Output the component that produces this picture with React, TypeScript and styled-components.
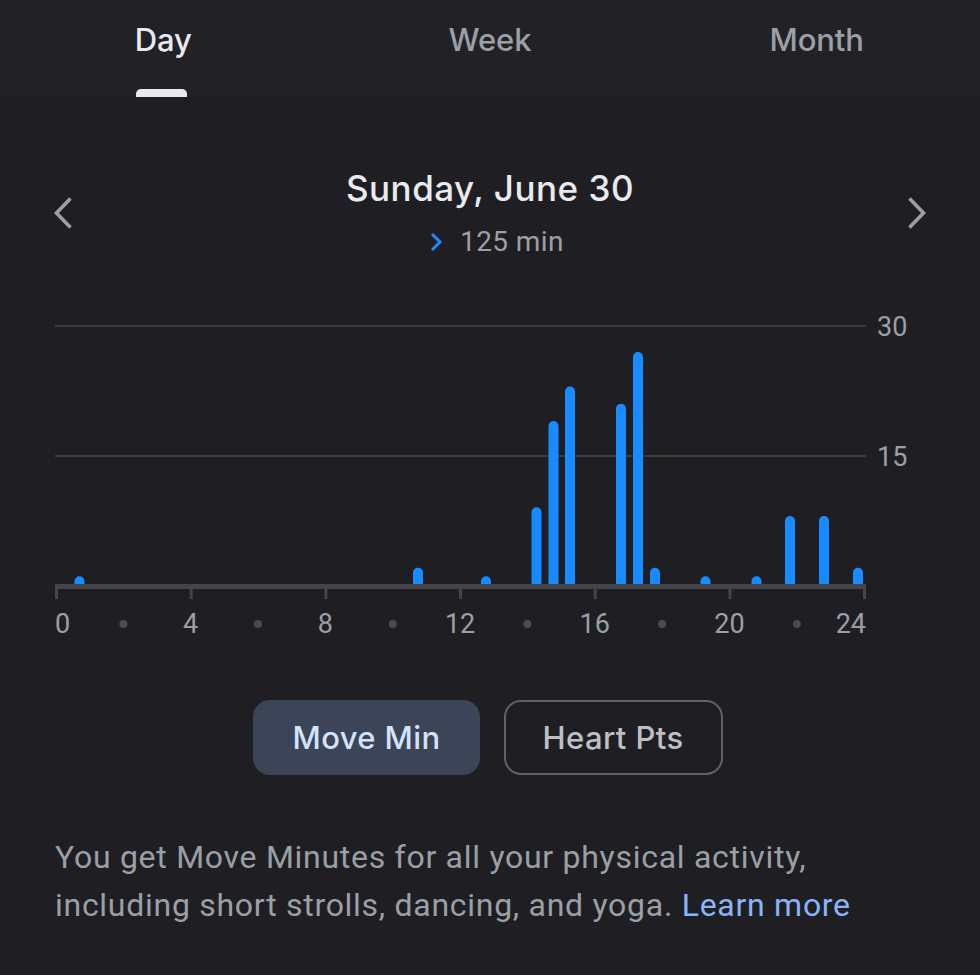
import * as React from "react"
import styled, { createGlobalStyle } from "styled-components"

const GlobalStyle = createGlobalStyle`
  html, body {
    margin: 0;
    padding: 0;
    background: #1f1f23;
  }
  * {
    box-sizing: border-box;
  }
`

const TABS = ["Day", "Week", "Month"]

// [x centre in page px, minutes]
const BARS: [number, number][] = [
  [79.5, 1],
  [418, 2],
  [486, 1],
  [536.5, 9],
  [553.5, 19],
  [570, 23],
  [621, 21],
  [638, 27],
  [655, 2],
  [705.5, 1],
  [756.5, 1],
  [790, 8],
  [824, 8],
  [858, 2],
]

const CHART_LEFT = 55
const ZERO_Y = 275
const UNIT = 8.63
const AXIS_W = 811
const TICK_STEP = 134.7

const SANS = `Inter, "Open Sans", sans-serif`
const ROBOTO = `Roboto, "Liberation Sans", sans-serif`

export default function App() {
  const [tab, setTab] = React.useState(0)
  const [metric, setMetric] = React.useState(0)

  return (
    <Page>
      <GlobalStyle />
      <TabBar>
        {TABS.map((t, i) => (
          <Tab key={t} active={i === tab} onClick={() => setTab(i)}>
            {t}
            {i === tab && <Indicator />}
          </Tab>
        ))}
      </TabBar>

      <DateNav>
        <NavButton aria-label="Previous day">
          <svg width="22" height="34" viewBox="0 0 22 34">
            <path d="M17.5 2.5 L3.5 17 L17.5 31.5" fill="none" stroke="#9aa0a6" strokeWidth="3.6" />
          </svg>
        </NavButton>
        <DateBlock>
          <DateTitle>Sunday, June 30</DateTitle>
          <Total>
            <svg width="14" height="20" viewBox="0 0 14 20">
              <path d="M3 2 L11 10 L3 18" fill="none" stroke="#178bff" strokeWidth="3" />
            </svg>
            125 min
          </Total>
        </DateBlock>
        <NavButton aria-label="Next day">
          <svg width="22" height="34" viewBox="0 0 22 34">
            <path d="M4.5 2.5 L18.5 17 L4.5 31.5" fill="none" stroke="#9aa0a6" strokeWidth="3.6" />
          </svg>
        </NavButton>
      </DateNav>

      <ChartWrap>
        <svg width="870" height="332" viewBox="0 0 870 332">
          <line x1="0" y1="16" x2={AXIS_W} y2="16" stroke="#3a3b3f" strokeWidth="2" />
          <line x1="0" y1="146" x2={AXIS_W} y2="146" stroke="#3a3b3f" strokeWidth="2" />
          <AxisText x="822" y="19" dominantBaseline="middle">30</AxisText>
          <AxisText x="822" y="149" dominantBaseline="middle">15</AxisText>

          {BARS.map(([x, v], i) => {
            const cx = x - CHART_LEFT
            const h = v * UNIT + 2
            const top = ZERO_Y + 2 - h
            return (
              <path
                key={i}
                d={`M${cx - 5} ${ZERO_Y + 2} V${top + 5} A5 5 0 0 1 ${cx + 5} ${top + 5} V${ZERO_Y + 2} Z`}
                fill="#178bff"
              />
            )
          })}

          <rect x="0" y="274" width={AXIS_W} height="5" fill="#434549" />
          {Array.from({ length: 7 }).map((_, i) => (
            <rect key={i} x={Math.min(i * TICK_STEP, AXIS_W - 3)} y="274" width="3" height="15" fill="#434549" />
          ))}
          {Array.from({ length: 6 }).map((_, i) => (
            <circle key={i} cx={i * TICK_STEP + TICK_STEP / 2 + 1} cy="314" r="4" fill="#4a4c51" />
          ))}
          {[0, 4, 8, 12, 16, 20, 24].map((h, i) => (
            <AxisText
              key={h}
              x={i === 0 ? 0 : i === 6 ? AXIS_W : i * TICK_STEP + 1}
              y="316"
              dominantBaseline="middle"
              textAnchor={i === 0 ? "start" : i === 6 ? "end" : "middle"}
            >
              {h}
            </AxisText>
          ))}
        </svg>
      </ChartWrap>

      <Toggle>
        <Chip selected={metric === 0} onClick={() => setMetric(0)}>Move Min</Chip>
        <Chip selected={metric === 1} onClick={() => setMetric(1)}>Heart Pts</Chip>
      </Toggle>

      <Info>
        You get Move Minutes for all your physical activity, including short strolls, dancing, and
        yoga. <LearnMore href="#">Learn more</LearnMore>
      </Info>
    </Page>
  )
}

const Page = styled.div`
  width: 980px;
  height: 975px;
  overflow: hidden;
  background: #1f1f23;
`

const TabBar = styled.div`
  display: flex;
  height: 97px;
  background: #222226;
`

const Tab = styled.div<{ active: boolean }>`
  flex: 1;
  position: relative;
  display: flex;
  justify-content: center;
  padding-top: 18px;
  font-family: ${SANS};
  font-size: 31px;
  font-weight: 500;
  line-height: 44px;
  letter-spacing: -0.1px;
  color: ${p => (p.active ? "#e8eaed" : "#9aa0a6")};
  cursor: pointer;
`

const Indicator = styled.div`
  position: absolute;
  bottom: 0;
  left: 50%;
  margin-left: -27px;
  width: 51px;
  height: 8px;
  border-radius: 5px 5px 0 0;
  background: #e8eaed;
`

const DateNav = styled.div`
  display: flex;
  align-items: center;
  justify-content: space-between;
  padding: 69px 53px 0 53px;
`

const NavButton = styled.button`
  display: flex;
  padding: 0;
  border: 0;
  background: none;
  cursor: pointer;
`

const DateBlock = styled.div`
  display: flex;
  flex-direction: column;
  align-items: center;
  gap: 14px;
`

const DateTitle = styled.div`
  font-family: ${SANS};
  font-size: 35px;
  font-weight: 500;
  line-height: 44px;
  letter-spacing: 0.5px;
  color: #e8eaed;
`

const Total = styled.div`
  display: flex;
  align-items: center;
  gap: 17px;
  margin-left: 13px;
  font-family: ${ROBOTO};
  font-size: 28px;
  line-height: 36px;
  letter-spacing: 0.4px;
  color: #9aa0a6;
`

const ChartWrap = styled.div`
  margin-top: 50px;
  padding-left: ${CHART_LEFT}px;
  display: flex;
`

const AxisText = styled.text`
  font-family: ${ROBOTO};
  font-size: 27px;
  fill: #9aa0a6;
`

const Toggle = styled.div`
  display: flex;
  justify-content: center;
  gap: 24px;
  margin-top: 58px;
  padding-right: 4px;
`

const Chip = styled.button<{ selected: boolean }>`
  height: 75px;
  padding: 0 37px;
  border-radius: 17px;
  border: 2px solid ${p => (p.selected ? "transparent" : "#5f6368")};
  background: ${p => (p.selected ? "#3b4557" : "transparent")};
  color: ${p => (p.selected ? "#d3e3fd" : "#bdc1c6")};
  font-family: ${SANS};
  font-size: 31px;
  font-weight: 500;
  letter-spacing: 0.4px;
  cursor: pointer;
`

const Info = styled.p`
  margin: 58px 0 0;
  padding: 0 55px;
  font-family: ${ROBOTO};
  font-size: 32px;
  line-height: 48px;
  letter-spacing: 0.72px;
  color: #9aa0a6;
`

const LearnMore = styled.a`
  color: #8ab4f8;
  text-decoration: none;
`
